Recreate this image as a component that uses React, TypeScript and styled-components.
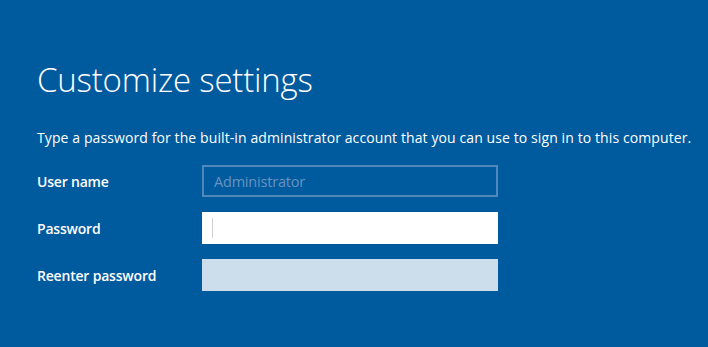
import React from 'react';
import styled, { createGlobalStyle } from 'styled-components';

const GlobalStyle = createGlobalStyle`
    html, body {
        margin: 0;
        padding: 0;
        background: #005a9e;
    }
    body {
        font-family: 'Open Sans', 'Noto Sans', sans-serif;
        color: #ffffff;
    }
`;

const Page = styled.div`
    width: 708px;
    height: 347px;
    box-sizing: border-box;
    padding: 60px 0 0 37px;
    background: #005a9e;
    overflow: hidden;
`;

const Title = styled.h1`
    margin: 0;
    font-size: 33px;
    font-weight: 300;
    line-height: 40px;
    letter-spacing: -0.2px;
`;

const Intro = styled.p`
    margin: 28px 0 0;
    font-size: 14px;
    line-height: 20px;
    letter-spacing: 0.1px;
`;

const Form = styled.div`
    display: grid;
    grid-template-columns: 165px 296px;
    row-gap: 15px;
    margin-top: 17px;
    align-items: center;
`;

const Label = styled.label`
    font-size: 14px;
    font-weight: 600;
    letter-spacing: -0.2px;
`;

type FieldKind = 'disabled' | 'active' | 'idle';

const Field = styled.div<{ $kind: FieldKind }>`
    position: relative;
    height: 32px;
    box-sizing: border-box;
    display: flex;
    align-items: center;
    padding-left: 10px;
    font-size: 14.5px;
    letter-spacing: -0.2px;
    background: ${({ $kind }) =>
        $kind === 'active' ? '#ffffff' : $kind === 'idle' ? '#ccdeeb' : 'transparent'};
    border: ${({ $kind }) => ($kind === 'disabled' ? '2px solid #4f88bb' : 'none')};
    color: #6893c0;
`;

const Caret = styled.span`
    width: 1px;
    height: 20px;
    background: #d0d0d0;
`;

export default function App() {
    return (
        <>
            <GlobalStyle />
            <Page>
                <Title>Customize settings</Title>
                <Intro>
                    Type a password for the built-in administrator account that you can use to sign in to this computer.
                </Intro>
                <Form>
                    <Label>User name</Label>
                    <Field $kind="disabled">Administrator</Field>
                    <Label>Password</Label>
                    <Field $kind="active">
                        <Caret />
                    </Field>
                    <Label>Reenter password</Label>
                    <Field $kind="idle" />
                </Form>
            </Page>
        </>
    );
}
